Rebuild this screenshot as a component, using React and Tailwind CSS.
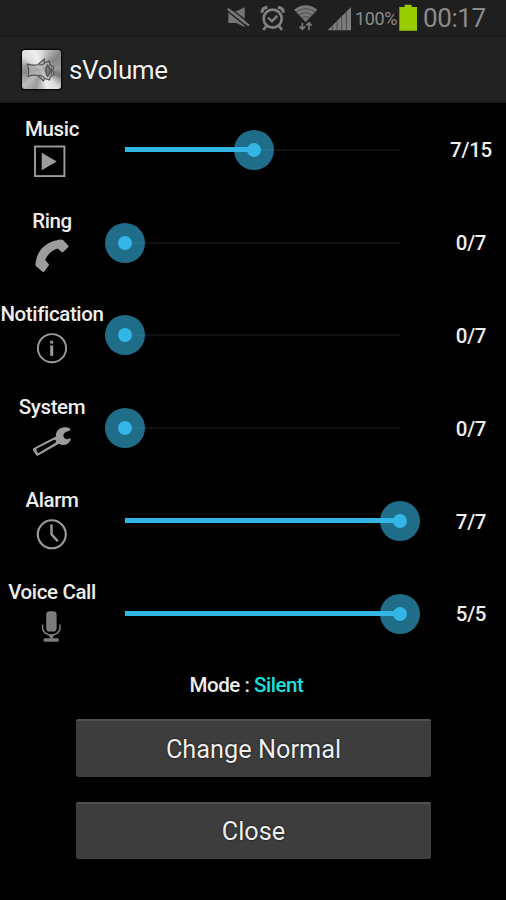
import React from "react";

const G = "#9c9c9c";

function MusicIcon() {
  return (
    <svg className="size-10" viewBox="0 0 40 40">
      <rect x="3" y="3.5" width="29.4" height="29.6" fill="none" stroke={G} strokeWidth="1.9" />
      <path d="M9.7 9.8 24.8 18.5 9.7 27.2Z" fill={G} />
    </svg>
  );
}

function PhoneIcon() {
  return (
    <svg className="size-10" viewBox="0 0 40 40">
      <path
        d="M25 5.2Q29 4 31.3 5.2L36.4 10.8Q36.8 11.6 36 12.4L31.2 17Q30.3 17.6 29.5 16.9L25.8 13.6Q16.5 16.5 13.2 25L16.7 29Q17.2 29.8 16.7 30.6L12.3 36.4Q11.4 37.4 10.3 36.5L4.3 31.6Q3.4 30.8 3.4 29.5C4.5 16 13 7.6 25 5.2Z"
        fill={G}
      />
    </svg>
  );
}

function InfoIcon() {
  return (
    <svg className="size-10" viewBox="0 0 40 40">
      <circle cx="20" cy="20.2" r="14.1" fill="none" stroke={G} strokeWidth="1.9" />
      <rect x="18.2" y="12.8" width="3" height="2.8" fill={G} />
      <rect x="18.2" y="17.4" width="3" height="10.4" fill={G} />
    </svg>
  );
}

function WrenchIcon() {
  return (
    <svg className="size-10" viewBox="0 0 40 40">
      <path
        fillRule="evenodd"
        d="M1.4 27.2 23.9 15.6C23.6 11.6 25 9 28 7.4C31 6 35 5.8 38.2 7.6L38 9.6L33.8 10.9Q31.2 12.2 31.3 14.9Q31.8 17.8 34.5 18.2L38.4 17.2Q39.2 18 38.3 19.8C36 23.8 31 25.4 26.9 22.8L6.2 34.5Q4.8 35.2 4 34L1 29.2Q.5 27.9 1.4 27.2ZM4.4 29.6 5.6 31.6Q6.2 32.3 7 31.8L23.4 21.8Q24.6 20.6 23.9 19.4Q23 18.2 21.6 18.9L5 27.6Q3.8 28.4 4.4 29.6Z"
        fill={G}
      />
    </svg>
  );
}

function ClockIcon() {
  return (
    <svg className="size-10" viewBox="0 0 40 40" fill="none" stroke={G}>
      <circle cx="19.8" cy="20.3" r="14" strokeWidth="2.1" />
      <path d="M19.5 10.6V20.4L25.8 27.2" strokeWidth="2.4" />
    </svg>
  );
}

function MicIcon() {
  return (
    <svg className="size-10" viewBox="0 0 40 40" fill="#7c7c7c">
      <rect x="14.2" y="5.2" width="10.4" height="20.4" rx="3.4" />
      <path d="M10.6 18.5V21.5C10.6 31.4 28 31.4 28 21.5V18.5" fill="none" stroke="#7c7c7c" strokeWidth="1.5" />
      <path d="M16.5 28.5H22.3L20.6 32.2H25.5Q27 32.4 27 34T25.4 35.8H12.9Q11.4 35.6 11.4 34T12.9 32.2H18.2Z" />
    </svg>
  );
}

const ROWS = [
  { name: "Music", value: 7, max: 15, Icon: MusicIcon },
  { name: "Ring", value: 0, max: 7, Icon: PhoneIcon },
  { name: "Notification", value: 0, max: 7, Icon: InfoIcon },
  { name: "System", value: 0, max: 7, Icon: WrenchIcon },
  { name: "Alarm", value: 7, max: 7, Icon: ClockIcon },
  { name: "Voice Call", value: 5, max: 5, Icon: MicIcon },
];

function VolumeRow({ name, value, max, Icon }) {
  const pct = `${(value / max) * 100}%`;
  return (
    <div className="flex h-[92.8px] items-center">
      <div className="flex h-full w-[104px] shrink-0 flex-col items-center pt-[13px]">
        <span className="h-[26px] whitespace-nowrap text-[20.5px] font-medium leading-[24px] tracking-[-0.37px]">{name}</span>
        <Icon />
      </div>
      <div className="relative ml-[21.4px] flex h-10 w-[274.6px] shrink-0 items-center">
        <div className="h-[2px] w-full bg-[#111]" />
        <div className="absolute left-0 top-[17px] h-[5px] bg-[#33b5e5]" style={{ width: pct }} />
        <div
          className="absolute top-0 flex size-10 -translate-x-1/2 items-center justify-center rounded-full bg-[#33b5e5]/60"
          style={{ left: pct }}
        >
          <div className="size-[14px] rounded-full bg-[#33b5e5]" />
        </div>
      </div>
      <span className="ml-[36px] w-[70px] pt-px text-center text-[20.5px] font-medium leading-6 tracking-[-0.3px]">
        {value}/{max}
      </span>
    </div>
  );
}

function StatusBar() {
  return (
    <div className="flex h-9 items-center bg-[#1f1f1f] pl-[221px] text-[#8b8b8b]">
      <svg className="h-9 w-[35px] shrink-0" viewBox="15 0 105 108" fill="#757575">
        <path d="M37 34H61L86 22V81L61 69H37Z" />
        <path d="M38 21 104 72" stroke="#1f1f1f" strokeWidth="4" />
        <path d="M35 26 99 77" stroke="#757575" strokeWidth="7" />
        <path d="M31 31 95 82" stroke="#1f1f1f" strokeWidth="4" />
      </svg>
      <svg className="h-9 w-[35px] shrink-0" viewBox="120 0 105 108" fill="none" stroke="#808080">
        <circle cx="170" cy="56" r="27" strokeWidth="8" />
        <path d="M156 53 168 64 184 47" strokeWidth="7" />
        <path d="M138 38Q138 24 154 22M202 38Q202 24 186 22" strokeWidth="9" />
        <path d="M151 78 142 90M189 78 198 90" strokeWidth="8" />
      </svg>
      <svg className="h-9 w-[35px] shrink-0" viewBox="225 0 105 108" fill="none" stroke="#777">
        <path d="M234 29Q269 3 304 29L269 66Z" fill="#777" stroke="none" />
        <path d="M239 37Q269 15 299 37M247 46Q269 30 291 46M256 54Q269 45 282 54" stroke="#444" strokeWidth="2.5" />
        <path d="M259 68V86M251 79 259 88 267 79M279 91V71M271 77 279 68 287 77" strokeWidth="5" />
      </svg>
      <svg className="h-9 w-[27px] shrink-0" viewBox="330 0 81 108">
        <path d="M335 91 405 21V91Z" fill="#7c7c7c" />
        <path d="M349 77V91M363 63V91M377 49V91M391 35V91" stroke="#484848" strokeWidth="3" />
      </svg>
      <span className="ml-[2px] w-[42px] whitespace-nowrap pt-[2px] text-[18px] leading-6 tracking-[-0.4px]">100%</span>
      <svg className="ml-[2px] h-9 w-[18px] shrink-0" viewBox="549 0 54 108">
        <path d="M550 21H566V14H587V21H603V92H550Z" fill="#99cc00" />
      </svg>
      <span className="ml-[6px] whitespace-nowrap text-[26px] leading-9 tracking-[-0.4px]">00:17</span>
    </div>
  );
}

function AppIcon() {
  return (
    <div className="flex size-[39px] items-center justify-center rounded-[3px] bg-[conic-gradient(#ddd,#aaa_8%,#858585_14%,#999_24%,#777_30%,#ddd_38%,#eee_45%,#999_55%,#bbb_63%,#888_72%,#999_78%,#ddd_85%,#eee_94%,#ddd)] shadow-[0_0_2px_1px_#000]">
      <svg className="size-[39px]" viewBox="0 0 39 39" fill="#b0b0b0" fillOpacity=".75" stroke="#505050" strokeWidth="1.2" strokeLinejoin="round">
        <path d="M5 14Q11 16 16 14.5L22.3 9V13.2L27 10.8L28 15L31.5 17L30.8 21L32 24.5L28.4 26.5L27.5 30L22.8 28.5L21.5 31L16 25.5Q11 24.5 6 26.5Q8 20 5 14Z" />
        <path d="M17 15Q21 15 22 13.5M17 25Q21 26 22.5 28" fill="none" />
        <path d="M25.5 15Q22 20.5 25.5 26.5Q31 21 25.5 15Z" fill="#666" />
        <path d="M29.3 17.5V24.5" fill="none" />
      </svg>
    </div>
  );
}

function HoloButton({ className, children }) {
  return (
    <button
      className={`w-[355px] rounded-[2px] border-t-2 border-t-[#505050] bg-[#3d3d3d] text-[25.3px] leading-none [text-shadow:0_0_2px_#000] ${className}`}
    >
      {children}
    </button>
  );
}

export default function App() {
  return (
    <div className="flex h-[900px] w-[506px] flex-col overflow-hidden bg-black font-['Roboto','Liberation_Sans',sans-serif] text-[#eee]">
      <StatusBar />
      <header className="flex h-[67px] shrink-0 items-center border-b-2 border-t border-b-[#171717] border-t-[#181818] bg-[#222] pl-[22px]">
        <AppIcon />
        <h1 className="ml-[8px] pt-[2px] text-[26px] leading-8 tracking-[-0.4px] text-[#f0f0f0] [text-shadow:0_0_2px_#000]">sVolume</h1>
      </header>
      <main className="flex flex-col pt-[0.5px]">
        {ROWS.map((r) => (
          <VolumeRow key={r.name} {...r} />
        ))}
        <p className="mt-[13px] h-6 pr-[13px] text-center text-[20.5px] font-medium leading-6 tracking-[-0.45px]">
          Mode : <span className="text-[#1ae0da]">Silent</span>
        </p>
        <div className="mt-[22px] flex flex-col items-start gap-[25px] pl-[76px]">
          <HoloButton className="h-[58px]">Change Normal</HoloButton>
          <HoloButton className="h-[57px]">Close</HoloButton>
        </div>
      </main>
    </div>
  );
}
